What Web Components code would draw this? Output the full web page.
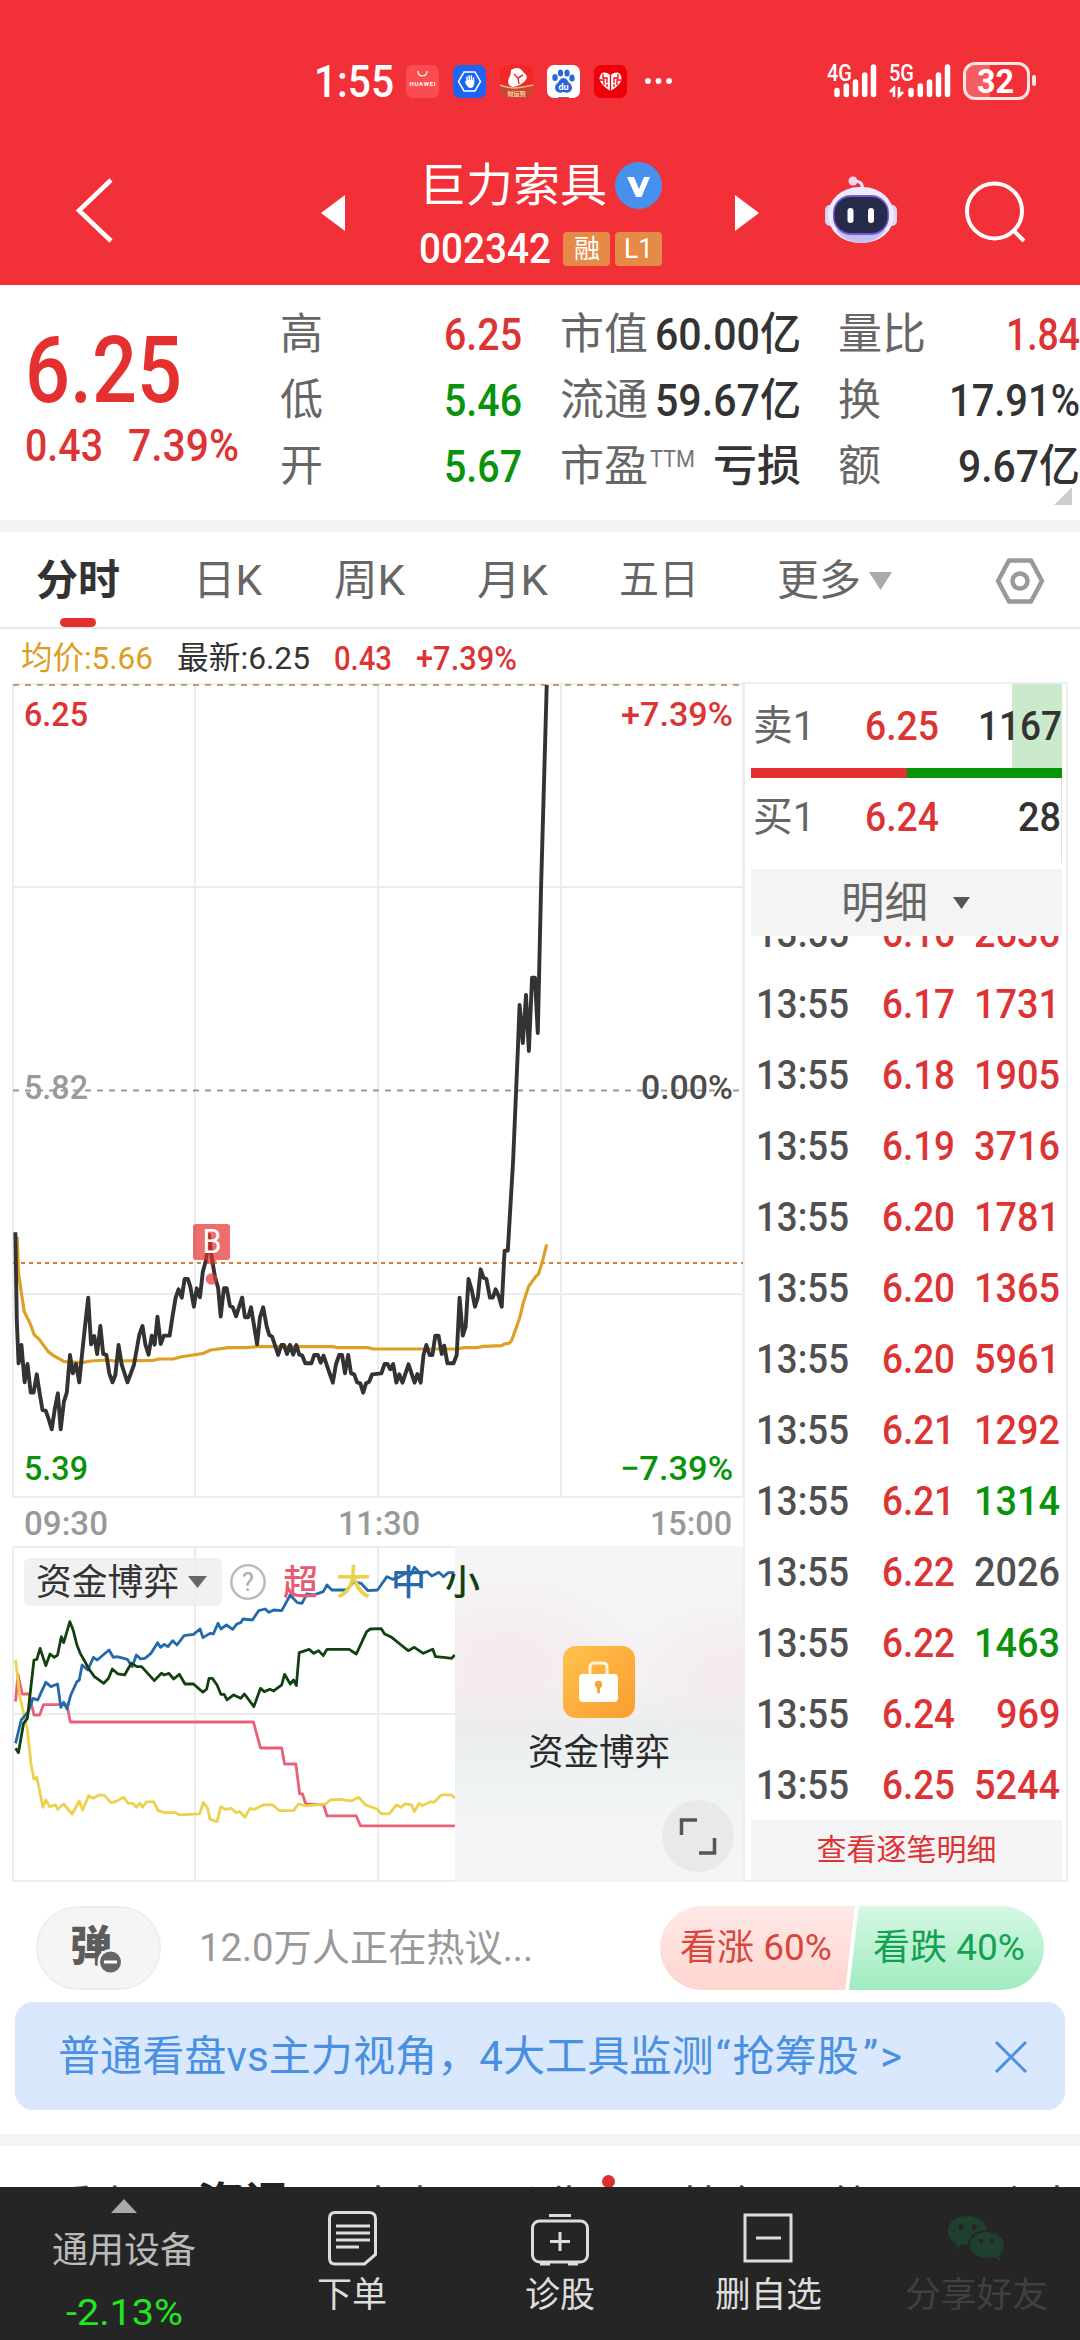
<!DOCTYPE html>
<html lang="zh-CN">
<head>
<meta charset="utf-8">
<title>巨力索具 002342</title>
<style>
html, body {
    margin: 0; padding: 0;
}
body {
    width: 1080px; height: 2340px;
    overflow: hidden;
    background: #fff;
    color: #333;
    font-family: Roboto, "Noto Sans CJK SC", sans-serif;
}
</style>
</head>
<body>
<stock-page></stock-page>
<script>
const BASE = `
<style>
:host { display: block; box-sizing: border-box; }
* { box-sizing: border-box; }
svg { display: block; flex: none; overflow: visible; }
.up { color: #dc3434; }
.down { color: #0a930a; }
</style>`;

// Defines an element from a piece of shadow markup.
function define(name, html) {
    let t = document.createElement('template');
    t.innerHTML = BASE + html;
    customElements.define(name, class extends HTMLElement {
        constructor() {
            super();
            this.attachShadow({mode: 'open'});
            this.shadowRoot.append(t.content.cloneNode(true));
        }
    });
}

// Text condensed or widened to an exact width: <fit-text w="80" s="40">6.25</fit-text>
class FitText extends HTMLElement {

    constructor() {
        super();
        this.attachShadow({mode: 'open'});
        this.shadowRoot.innerHTML = `
<style>
:host { display: block; flex: none; white-space: nowrap; line-height: 1; }
span { display: inline-block; transform-origin: 0 50%; vertical-align: top; }
</style>
<span><slot></slot></span>`;
    }

    connectedCallback() {
        let span = this.shadowRoot.querySelector('span');
        let w = Number(this.getAttribute('w'));
        let s = Number(this.getAttribute('s'));
        this.style.fontSize = `${s}px`;
        this.style.width = `${w}px`;
        this.style.height = `${s}px`;
        let natural = span.getBoundingClientRect().width;
        if (natural) {
            span.style.transform = `scaleX(${w / natural})`;
        }
    }
}

define('status-bar', `
<style>
:host { height: 120px; padding: 61px 0 0 314px; color: #fff; }
.row { display: flex; align-items: center; height: 40px; }
.apps { display: flex; gap: 14px; margin-left: 12px; }
.more { margin-left: 18px; }
.signal { margin-left: 154px; }
</style>
<div class="row">
    <fit-text w="80" s="45" style="font-weight:500">1:55</fit-text>
    <div class="apps">
        <svg width="33" height="33" viewBox="0 0 33 33">
            <rect width="33" height="33" rx="7" fill="#fb4c50"/>
            <path d="M12 6q0 5 4.500 5t4.500-5" fill="none" stroke="#fff" stroke-width="1.200"/>
            <text x="16.500" y="21" font-size="6" font-weight="700" text-anchor="middle" textLength="26" fill="#fff">HUAWEI</text>
        </svg>
        <svg width="33" height="33" viewBox="0 0 33 33">
            <rect width="33" height="33" rx="7" fill="#1e64f4"/>
            <path d="M11 7h11l5.500 9.500L22 26H11L5.500 16.500z" fill="none" stroke="#fff" stroke-width="1.500"/>
            <path d="M14 17v-5M16.200 16v-5M18.400 16v-5M20.500 17v-4" stroke="#fff" stroke-width="1.500" stroke-linecap="round"/>
            <path d="M11.500 16l2 1v-2h7.700v3q0 5-4 5-3 0-5.700-7z" fill="#fff"/>
        </svg>
        <svg width="33" height="33" viewBox="0 0 33 33">
            <rect width="33" height="33" rx="7" fill="#f32726"/>
            <path d="M0 20h33v6q0 7-7 7H7q-7 0-7-7z" fill="#c94630"/>
            <path d="M11 5q8-5 13 3 5 3 1 8-5 5-12 6-7-2-4-9 2-3 2-8z" fill="#fff"/>
            <path d="M14 9l4 4 1 6M18 13l5-3" fill="none" stroke="#f32726" stroke-width="1.500"/>
            <path d="M0 20q8 3 14 3t19-3" fill="none" stroke="#f4b183" stroke-width="1.500"/>
            <text x="16.500" y="30.500" font-size="6" font-weight="700" text-anchor="middle" fill="#fbd9a8">财运到</text>
        </svg>
        <svg width="33" height="33" viewBox="0 0 33 33">
            <rect width="33" height="33" rx="7" fill="#fff"/>
            <g fill="#2b66d9">
                <ellipse cx="8" cy="12.500" rx="2.700" ry="3.500"/>
                <ellipse cx="13.500" cy="8" rx="2.600" ry="3.500"/>
                <ellipse cx="20" cy="8" rx="2.600" ry="3.500"/>
                <ellipse cx="25" cy="13" rx="2.700" ry="3.500"/>
                <path d="M16.500 13q3 0 5 4 5 4 3 8t-8 2q-6 2-8-2t3-8q2-4 5-4z"/>
            </g>
            <text x="16.500" y="24.500" font-size="9" font-weight="700" text-anchor="middle" fill="#fff">du</text>
            <path d="M11 32.500h11" stroke="#a4547c"/>
        </svg>
        <svg width="33" height="33" viewBox="0 0 33 33">
            <rect width="33" height="33" rx="7" fill="#ef0008"/>
            <path d="M16.500 26Q5 19 5.500 13 7 6 13 8l3.500 2L20 8q6-2 7.500 5 .500 6-11 13z" fill="#fff"/>
            <path d="M16.500 9v17M9 9v4h4v5M24 9v4h-4v5M6 15h4v5M27 15h-4v5M13 22v-3M20 22v-3" fill="none" stroke="#ef0008" stroke-width="1.300"/>
        </svg>
    </div>
    <svg class="more" width="27" height="8" viewBox="0 0 27 8" fill="#fff">
        <circle cx="3" cy="4" r="2.900"/><circle cx="13.500" cy="4" r="2.900"/><circle cx="24" cy="4" r="2.900"/>
    </svg>
    <svg class="signal" width="212" height="40" viewBox="826 61 212 40">
        <g fill="#fff" font-weight="500" font-size="24">
            <text x="827" y="81" textLength="25" lengthAdjust="spacingAndGlyphs">4G</text>
            <text x="889" y="81" textLength="25" lengthAdjust="spacingAndGlyphs">5G</text>
        </g>
        <g stroke="#fff" stroke-width="5.500" stroke-linecap="round">
            <path d="M837 90.500v4M846.300 86v8.500M855.500 82v12.500M864.700 75v19.500M873.500 67v27.500"/>
            <path d="M911 90.500v4M920.300 86v8.500M929.500 82v12.500M938.500 75v19.500M947.500 67v27.500"/>
        </g>
        <path d="M890 92l4-4v9M899 87v9l4-4" fill="none" stroke="#fff" stroke-width="2.500"/>
        <path d="M990 63h-15q-11 0-11 11v13q0 11 11 11h15z" fill="#fff" opacity=".22"/>
        <rect x="964.500" y="63.500" width="64" height="35" rx="10.500" fill="none" stroke="#ffe4e4" stroke-width="3"/>
        <rect x="1032" y="75" width="4" height="11" rx="2" fill="#ffe4e4"/>
        <text x="977" y="93" font-size="34" font-weight="700" fill="#fff" textLength="37" lengthAdjust="spacingAndGlyphs">32</text>
    </svg>
</div>`);

define('stock-header', `
<style>
:host { height: 285px; background: #f23037; color: #fff; }
.bar { display: grid; grid-template-columns: 75px 246px 98px 316px 89px 140px 116px; height: 165px; }
.back { margin-top: 58px; }
.prev, .next { margin-top: 75px; }
.title { display: flex; gap: 8px; align-items: center; height: 48px; margin-top: 41px; }
.code { display: flex; align-items: center; height: 34px; margin-top: 23px; font-weight: 500; }
.tag { display: flex; align-items: center; justify-content: center; width: 47px; height: 34px; border-radius: 4px; background: #e58a47; font-weight: 400; }
.code .tag { margin-left: 12px; }
.code .tag + .tag { margin-left: 5px; }
.robot { margin-top: 54px; }
.search { margin-top: 60px; }
</style>
<status-bar></status-bar>
<div class="bar">
    <div></div>
    <svg class="back" width="40" height="66" viewBox="75 178 40 66"><path d="M111 180L79 210.500l32 30.500" fill="none" stroke="#fff" stroke-width="4.500"/></svg>
    <svg class="prev" width="24" height="36" viewBox="0 0 24 36"><path d="M24 0v36L0 18z" fill="#fff"/></svg>
    <div>
        <div class="title">
            <fit-text w="188" s="46">巨力索具</fit-text>
            <svg width="47" height="47" viewBox="0 0 47 47"><circle cx="23.500" cy="23.500" r="23.500" fill="#4790eb"/><path d="M12 15h7l5 12 5-12h6l-8.500 20h-5.500z" fill="#fff"/></svg>
        </div>
        <div class="code">
            <fit-text w="132" s="42">002342</fit-text>
            <div class="tag"><fit-text w="26" s="26">融</fit-text></div>
            <div class="tag"><fit-text w="29" s="28">L1</fit-text></div>
        </div>
    </div>
    <svg class="next" width="24" height="36" viewBox="0 0 24 36"><path d="M0 0v36l24-18z" fill="#fff"/></svg>
    <svg class="robot" width="74" height="70" viewBox="824 174 74 70">
        <path d="M862 190q2-9-8-9" fill="none" stroke="#eee2fa" stroke-width="3"/>
        <circle cx="853" cy="181" r="4.500" fill="#f2d6ef"/>
        <rect x="825" y="205" width="10" height="21" rx="5" fill="#d8d5f8"/>
        <rect x="887" y="205" width="10" height="21" rx="5" fill="#d8d5f8"/>
        <rect x="828" y="187" width="66" height="56" rx="31" ry="28" fill="#eceafd"/>
        <path d="M836 230q10 13 25 13t25-13z" fill="#c3bff0"/>
        <rect x="833" y="195" width="56" height="40" rx="18" fill="#7a59d8"/>
        <rect x="834.500" y="197" width="53" height="36" rx="16" fill="#252b49"/>
        <path d="M850.500 211v9M871 211v9" stroke="#fff" stroke-width="6" stroke-linecap="round"/>
    </svg>
    <svg class="search" width="62" height="64" viewBox="964 180 62 64" fill="none" stroke="#fff" stroke-width="4"><circle cx="994.500" cy="211" r="27.500"/><path d="M1013 230l11 11"/></svg>
</div>`);

define('quote-summary', `
<style>
:host { display: grid; grid-template-columns: 280px 280px 278px 242px; height: 235px; position: relative; }
.price { padding: 40px 0 0 25px; font-weight: 500; }
.change { display: flex; gap: 25px; margin-top: 6px; }
.col { padding-top: 16px; }
.col > div { display: flex; justify-content: space-between; align-items: center; height: 66px; font-weight: 500; }
.lab { color: #666; font-weight: 400; }
.a { width: 242px; }
.b { width: 241px; }
.c { width: 242px; }
.ttm { align-self: flex-start; margin: 14px auto 0 2px; color: #777; font-weight: 400; }
.corner { position: absolute; right: 8px; bottom: 15px; width: 18px; height: 18px; background: #ccc; clip-path: polygon(100% 0, 100% 100%, 0 100%); }
</style>
<div class="price up">
    <fit-text w="157" s="92" style="color:#e53030">6.25</fit-text>
    <div class="change"><fit-text w="78" s="45">0.43</fit-text><fit-text w="111" s="45">7.39%</fit-text></div>
</div>
<div class="col a">
    <div><fit-text class="lab" w="43" s="43">高</fit-text><fit-text class="up" w="78" s="45">6.25</fit-text></div>
    <div><fit-text class="lab" w="43" s="43">低</fit-text><fit-text class="down" w="78" s="45">5.46</fit-text></div>
    <div><fit-text class="lab" w="43" s="43">开</fit-text><fit-text class="down" w="78" s="45">5.67</fit-text></div>
</div>
<div class="col b">
    <div><fit-text class="lab" w="88" s="43">市值</fit-text><fit-text w="146" s="45">60.00亿</fit-text></div>
    <div><fit-text class="lab" w="88" s="43">流通</fit-text><fit-text w="146" s="45">59.67亿</fit-text></div>
    <div><fit-text class="lab" w="88" s="43">市盈</fit-text><fit-text class="ttm" w="45" s="24">TTM</fit-text><fit-text w="88" s="43">亏损</fit-text></div>
</div>
<div class="col c">
    <div><fit-text class="lab" w="88" s="43">量比</fit-text><fit-text class="up" w="74" s="45">1.84</fit-text></div>
    <div><fit-text class="lab" w="43" s="43">换</fit-text><fit-text w="131" s="45">17.91%</fit-text></div>
    <div><fit-text class="lab" w="43" s="43">额</fit-text><fit-text w="122" s="45">9.67亿</fit-text></div>
</div>
<div class="corner"></div>`);

define('period-tabs', `
<style>
:host { display: grid; grid-template-columns: 36px 157px 141px 143px 142px 158px 92px 126px 1fr; align-items: center; height: 97px; padding-top: 2px; border-bottom: 2px solid #e8e8e8; color: #666; position: relative; }
.on { color: #333; font-weight: 700; }
i { position: absolute; left: 60px; bottom: 0; width: 36px; height: 9px; border-radius: 5px; background: #e53030; }
</style>
<span></span>
<fit-text class="on" w="84" s="42">分时</fit-text>
<fit-text w="69" s="42">日K</fit-text>
<fit-text w="71" s="42">周K</fit-text>
<fit-text w="71" s="42">月K</fit-text>
<fit-text w="80" s="41">五日</fit-text>
<fit-text w="84" s="42">更多</fit-text>
<svg width="23" height="18" viewBox="0 0 23 18"><path d="M0 0h23L11.500 18z" fill="#aaa"/></svg>
<svg width="50" height="46" viewBox="0 0 50 46" fill="none" stroke="#999" stroke-width="4.500" stroke-linejoin="round"><path d="M14 2.500h22L47 23 36 43.500H14L3 23z"/><circle cx="25" cy="23" r="7.500"/></svg>
<i></i>`);

define('trend-chart', `
<style>
:host { width: 743px; height: 917px; }
.info { display: flex; gap: 24px; align-items: center; height: 54px; padding: 4px 0 0 21px; font-weight: 500; }
.info .cn { font-weight: 400; }
.avg { color: #dc9e20; }
text { font-size: 34px; }
</style>
<div class="info">
    <fit-text class="avg cn" w="132" s="32">均价:5.66</fit-text>
    <fit-text class="cn" w="133" s="32">最新:6.25</fit-text>
    <fit-text class="up" w="58" s="33">0.43</fit-text>
    <fit-text class="up" w="101" s="33">+7.39%</fit-text>
</div>
<svg width="743" height="863" viewBox="0 683 743 863" font-weight="500">
    <g fill="none" stroke="#ececec" stroke-width="2">
        <path d="M13 684H743M13 887H743M13 1294H743M13 1497H743M13 684V1497M195 684V1497M378 684V1497M561 684V1497M743 684V1497"/>
    </g>
    <path d="M13 685H743" stroke="#c0a070" stroke-width="2" stroke-dasharray="6 6"/>
    <path d="M13 1090.500H743" stroke="#999" stroke-width="2" stroke-dasharray="6 6"/>
    <path d="M13 1263H743" stroke="#d2813c" stroke-width="2" stroke-dasharray="4 4"/>
    <g transform="translate(0 1180) scale(.3571 .3333)" fill="none" stroke-linejoin="round">
        <polyline stroke="#dda022" stroke-width="3.200" vector-effect="non-scaling-stroke" points="48,170 52,280 60,340 68,395 85,432 96,465 110,478 135,515 150,527 180,545 230,548 255,543 300,540 320,543 430,541 445,537 485,537 505,531 540,525 570,520 590,510 640,503 690,503 720,500 930,500 945,503 1030,503 1045,507 1280,507 1300,503 1335,503 1355,499 1405,497 1412,492 1425,490 1432,483 1440,460 1455,415 1465,370 1480,320 1490,305 1500,290 1508,282 1520,240 1531,193"/>
        <polyline stroke="#333" stroke-width="3.900" vector-effect="non-scaling-stroke" points="43,157 47,420 52,550 60,495 69,607 77,552 86,638 94,638 103,583 111,640 119,690 128,692 137,720 145,748 153,690 162,640 170,748 179,665 187,638 196,525 204,580 213,552 222,607 230,520 239,430 247,353 255,493 264,468 272,522 281,438 289,522 298,525 306,580 315,607 323,585 332,495 341,555 357,607 375,555 390,465 399,438 407,493 416,524 425,467 433,494 441,410 450,492 459,467 475,467 483,410 492,352 500,328 509,353 517,297 526,297 533,320 543,380 551,325 560,352 568,275 577,240 585,165 594,240 602,290 611,325 618,410 627,325 635,325 644,378 652,382 661,409 678,353 686,412 695,412 703,382 720,493 728,412 737,382 747,440 754,465 762,470 779,525 788,495 795,495 804,522 812,495 821,524 830,495 838,524 846,526 855,550 872,550 880,525 890,525 898,548 906,527 932,608 941,552 950,525 958,525 966,580 975,525 983,580 992,583 1000,607 1009,610 1017,638 1025,610 1034,605 1042,583 1068,580 1077,552 1085,552 1093,568 1101,552 1110,608 1118,583 1127,608 1144,553 1161,608 1169,582 1178,608 1186,525 1194,495 1203,525 1211,525 1219,467 1228,467 1237,522 1244,497 1253,550 1270,550 1279,525 1287,353 1296,467 1304,440 1312,297 1321,330 1330,380 1338,353 1346,268 1354,293 1362,297 1372,353 1380,353 1388,328 1397,350 1405,380 1413,212 1422,212 1437,-60 1450,-387 1455,-525 1464,-411 1473,-555 1481,-387 1490,-607 1498,-607 1506,-441 1515,-870 1531,-1485"/>
    </g>
    <g fill="#e53030" fill-opacity=".7">
        <path d="M196 1224h31q3 0 3 3v30q0 3-3 3h-10l-5.500 6-5.500-6h-10q-3 0-3-3v-30q0-3 3-3z"/>
        <circle cx="211.500" cy="1279" r="5.800"/>
    </g>
    <text x="202.500" y="1253" font-weight="400" style="font-size:33px" fill="#fff" textLength="19" lengthAdjust="spacingAndGlyphs">B</text>
    <text x="24" y="726" fill="#dc3434" textLength="64" lengthAdjust="spacingAndGlyphs">6.25</text>
    <text x="621" y="726" fill="#dc3434" textLength="112" lengthAdjust="spacingAndGlyphs">+7.39%</text>
    <text x="24" y="1099" fill="#999" textLength="64" lengthAdjust="spacingAndGlyphs">5.82</text>
    <text x="641" y="1099" fill="#4c4c4c" textLength="92" lengthAdjust="spacingAndGlyphs">0.00%</text>
    <text x="24" y="1480" fill="#0a930a" textLength="64" lengthAdjust="spacingAndGlyphs">5.39</text>
    <text x="620" y="1480" fill="#0a930a" textLength="113" lengthAdjust="spacingAndGlyphs">−7.39%</text>
    <g fill="#999">
        <text x="24" y="1535" textLength="84" lengthAdjust="spacingAndGlyphs">09:30</text>
        <text x="338" y="1535" textLength="82" lengthAdjust="spacingAndGlyphs">11:30</text>
        <text x="650" y="1535" textLength="82" lengthAdjust="spacingAndGlyphs">15:00</text>
    </g>
</svg>`);

define('fund-chart', `
<style>
:host { width: 731px; height: 336px; margin-left: 12px; display: grid; }
svg.plot, .over { grid-area: 1 / 1; }
.over { display: grid; grid-template-columns: 443px 288px; z-index: 1; }
.lock { grid-area: 1 / 2; display: flex; flex-direction: column; align-items: center; padding-top: 100px; position: relative;
    background: radial-gradient(ellipse 45% 28% at 18% 35%, #f5e9ec, transparent), radial-gradient(ellipse 35% 22% at 95% 38%, #f4eaec, transparent),
    linear-gradient(#f5f5f6 0, #f4f2f4 40%, #eaedee 54%, #edf2f3 68%, #f4f4f6 84%, #f5f4f7 100%); }
.lock fit-text { margin-top: 17px; color: #2a2a2a; }
.zoom { position: absolute; right: 9px; bottom: 10px; }
.legend { grid-area: 1 / 1 / 2 / 3; display: flex; align-items: center; align-self: start; height: 48px; margin: 12px 0 0 12px; z-index: 1; }
.legend fit-text { position: relative; top: 1px; }
.chip { display: flex; align-items: center; gap: 9px; width: 198px; height: 48px; padding-left: 12px; border-radius: 6px; background: rgba(238,238,238,.85); }
.help { margin: 0 17px 0 8px; }
</style>
<svg class="plot" width="731" height="336" viewBox="12 1546 731 336">
    <path d="M13 1547H743M13 1714H743M13 1881H743M13 1547V1881M195 1547V1881M378 1547V1881" fill="none" stroke="#ececec" stroke-width="2"/>
    <g transform="translate(0 1540) scale(.4719 .3333)" fill="none" stroke-linejoin="round" stroke-width="2.800">
        <polyline vector-effect="non-scaling-stroke" stroke="#ea6076" points="33,485 38,403 47,462 62,462 72,525 84,525 92,494 128,494 142,494 149,546 537,546 552,624 597,624 603,672 627,672 635,762 641,762 648,792 686,795 693,828 755,828 764,858 964,858"/>
        <polyline vector-effect="non-scaling-stroke" stroke="#ecd24c" points="33,360 42,470 58,570 66,675 72,718 78,712 91,802 97,780 105,800 118,795 122,808 135,792 153,822 168,783 175,810 188,767 197,775 210,765 222,767 235,788 245,785 262,772 272,790 282,790 289,802 297,790 302,802 310,786 326,786 335,812 350,818 372,818 380,825 423,822 431,787 440,805 445,838 460,845 468,800 477,808 490,805 500,818 508,815 519,832 530,805 540,808 558,795 578,795 592,812 622,812 632,792 650,798 690,792 700,780 720,778 745,783 760,772 775,795 800,808 808,822 825,822 840,795 850,802 858,792 872,795 878,815 888,790 895,797 912,785 920,787 935,765 957,765 964,775"/>
        <polyline vector-effect="non-scaling-stroke" stroke="#2469ac" points="33,610 45,540 60,515 70,475 80,480 88,455 97,427 108,440 122,432 129,502 135,487 142,507 150,465 163,425 168,420 174,375 186,390 198,352 206,360 231,330 240,352 248,350 270,358 280,380 289,345 298,357 307,355 320,340 334,308 340,322 348,313 356,320 366,302 375,315 390,287 410,283 424,267 430,293 445,280 452,282 462,250 468,267 480,255 493,268 502,252 510,248 515,237 535,240 548,212 562,207 570,217 580,210 597,212 615,165 630,188 640,190 650,162 665,165 685,155 693,135 703,150 735,150 750,125 765,130 780,152 800,150 820,110 832,118 845,112 860,100 870,105 878,82 890,100 905,95 915,108 930,97 940,110 950,98 963,98"/>
        <polyline vector-effect="non-scaling-stroke" stroke="#134010" points="33,625 39,638 50,550 58,535 72,360 78,358 85,325 97,377 106,342 115,352 122,345 130,290 135,308 148,245 155,270 163,315 170,340 190,390 200,410 220,430 230,415 238,387 250,402 264,405 278,370 290,380 300,380 327,422 342,400 348,405 358,400 368,417 380,403 392,432 410,432 430,457 438,447 443,415 450,415 460,435 468,463 475,463 481,480 495,465 510,475 518,462 538,500 552,445 560,455 572,448 580,453 597,435 603,403 615,432 622,420 628,437 634,338 655,328 665,340 675,332 685,347 693,328 740,328 755,342 777,275 785,267 808,266 815,282 830,292 850,315 865,332 878,322 897,340 917,328 923,350 940,352 957,355 964,345"/>
    </g>
</svg>
<div class="over">
    <div class="lock">
        <svg width="72" height="72" viewBox="0 0 72 72">
            <defs><linearGradient id="g" x2="1" y2="1"><stop stop-color="#fec24c"/><stop offset="1" stop-color="#fb9d30"/></linearGradient></defs>
            <rect width="72" height="72" rx="13" fill="url(#g)"/>
            <path d="M27 29v-8q0-4 4-4h9q4 0 4 4v8" fill="none" stroke="#fff3d6" stroke-width="3"/>
            <rect x="16" y="28" width="39" height="28" rx="4" fill="#fff"/>
            <circle cx="35.500" cy="38.500" r="3.700" fill="#f5a63b"/><path d="M35.500 40v6" stroke="#f5a63b" stroke-width="3" stroke-linecap="round"/>
        </svg>
        <fit-text w="142" s="36">资金博弈</fit-text>
        <svg class="zoom" width="72" height="72" viewBox="0 0 72 72"><circle cx="36" cy="36" r="36" fill="#e9e9ea"/><path d="M35 20H19.500V35M37 53H52.500V38" fill="none" stroke="#555" stroke-width="3.500"/></svg>
    </div>
    <div class="legend">
        <div class="chip"><fit-text w="143" s="36">资金博弈</fit-text><svg width="19" height="12" viewBox="0 0 19 12"><path d="M0 0h19L9.500 12z" fill="#666"/></svg></div>
        <svg class="help" width="36" height="36" viewBox="0 0 36 36"><circle cx="18" cy="18" r="16.700" fill="none" stroke="#bbb" stroke-width="2.500"/><text x="18" y="27" font-size="25" text-anchor="middle" fill="#aaa">?</text></svg>
        <fit-text w="35" s="35" style="color:#ea5a72;font-weight:500">超</fit-text>
        <fit-text w="35" s="35" style="color:#ecd24c;font-weight:500;margin-left:18px">大</fit-text>
        <fit-text w="35" s="35" style="color:#2469ac;font-weight:500;margin-left:20px">中</fit-text>
        <fit-text w="35" s="35" style="color:#134010;font-weight:500;margin-left:19px">小</fit-text>
    </div>
</div>`);

class TradeRow extends HTMLElement {

    constructor() {
        super();
        this.attachShadow({mode: 'open'});
    }

    connectedCallback() {
        let volume = this.getAttribute('volume');
        let width = volume.length * 21.500;
        this.shadowRoot.innerHTML = `${BASE}
<style>
:host { display: flex; align-items: center; height: 71px; font-weight: 500; }
.time { color: #505050; margin-left: 5px; }
.price { margin-left: 33px; }
.volume { margin: 0 2px 0 auto; }
.flat { color: #505050; }
</style>
<fit-text class="time" w="93" s="41">13:55</fit-text>
<fit-text class="price up" w="73" s="41">${this.getAttribute('price')}</fit-text>
<fit-text class="volume ${this.getAttribute('side') || 'up'}" w="${width}" s="41">${volume}</fit-text>`;
    }
}

define('order-book', `
<style>
:host { width: 325px; height: 1200px; margin-top: 53px; padding: 0 4px 0 6px; border: 2px solid #eee; }
.quote { display: flex; align-items: center; height: 84px; padding-left: 2px; font-weight: 500; color: #333; }
.quote .lab { color: #666; font-weight: 400; }
.quote .p { margin-left: 50px; }
.quote .v { margin: 0 0 0 auto; }
.sell { background: linear-gradient(#cbeacb, #cbeacb) right / 50px 100% no-repeat; }
.buy { height: 85px; padding-bottom: 7px; border-right: 1px solid #e9dde0; }
.ratio { display: flex; height: 10px; background: #059405; }
.ratio i { width: 156px; background: #e53030; }
.head { display: flex; align-items: center; justify-content: center; gap: 25px; height: 67px; margin-top: 6px; padding-right: 2px; background: #f4f4f4; color: #666; }
.head fit-text { position: relative; top: 1px; }
.list { height: 884px; overflow: hidden; }
.list div { margin-top: -38px; }
.foot { display: flex; align-items: center; justify-content: center; height: 60px; background: #f4f4f4; }
</style>
<div class="quote sell"><fit-text class="lab" w="62" s="41">卖1</fit-text><fit-text class="p up" w="74" s="41">6.25</fit-text><fit-text class="v" w="84" s="41">1167</fit-text></div>
<div class="ratio"><i></i></div>
<div class="quote buy"><fit-text class="lab" w="62" s="41">买1</fit-text><fit-text class="p up" w="74" s="41">6.24</fit-text><fit-text class="v" w="43" s="41">28</fit-text></div>
<div class="head"><fit-text w="87" s="43">明细</fit-text><svg width="17" height="12" viewBox="0 0 17 12"><path d="M0 0h17L8.500 12z" fill="#555"/></svg></div>
<div class="list"><div>
    <trade-row price="6.16" volume="2636"></trade-row>
    <trade-row price="6.17" volume="1731"></trade-row>
    <trade-row price="6.18" volume="1905"></trade-row>
    <trade-row price="6.19" volume="3716"></trade-row>
    <trade-row price="6.20" volume="1781"></trade-row>
    <trade-row price="6.20" volume="1365"></trade-row>
    <trade-row price="6.20" volume="5961"></trade-row>
    <trade-row price="6.21" volume="1292"></trade-row>
    <trade-row price="6.21" volume="1314" side="down"></trade-row>
    <trade-row price="6.22" volume="2026" side="flat"></trade-row>
    <trade-row price="6.22" volume="1463" side="down"></trade-row>
    <trade-row price="6.24" volume="969"></trade-row>
    <trade-row price="6.25" volume="5244"></trade-row>
</div></div>
<div class="foot up"><fit-text w="180" s="30">查看逐笔明细</fit-text></div>`);

define('chat-row', `
<style>
:host { display: flex; align-items: center; height: 84px; margin-top: 24px; padding: 0 36px; }
.pill { display: flex; align-items: center; justify-content: center; width: 125px; height: 84px; padding-right: 4px; border: 2px solid #eee; border-radius: 42px; background: #f5f5f5; }
.talk { margin-left: 38px; color: #999; }
.vote { display: flex; width: 384px; height: 84px; margin-left: auto; }
.vote div { display: flex; align-items: center; height: 84px; }
.bull { width: 195px; padding-left: 20px; border-radius: 42px 0 0 42px; color: #d9473c; background: linear-gradient(#ffe9e7, #fed5cf); clip-path: polygon(0 0, 100% 0, 95% 100%, 0 100%); }
.bear { width: 195px; margin-left: -6px; padding-left: 24px; border-radius: 0 42px 42px 0; color: #12a150; background: linear-gradient(#d6f8e4, #a0ecc0); clip-path: polygon(5% 0, 100% 0, 100% 100%, 0 100%); }
</style>
<div class="pill">
    <svg width="52" height="50" viewBox="72 1921 52 50">
        <text x="71" y="1959" font-size="42" font-weight="900" fill="#5c5c5c">弹</text>
        <circle cx="111.500" cy="1960" r="13" fill="#f5f5f5"/><circle cx="111.500" cy="1960" r="10.500" fill="#666"/><path d="M105 1960h13" stroke="#fff" stroke-width="3"/>
    </svg>
</div>
<fit-text class="talk" w="334" s="38">12.0万人正在热议...</fit-text>
<div class="vote">
    <div class="bull"><fit-text w="152" s="36">看涨 60%</fit-text></div>
    <div class="bear"><fit-text w="152" s="36">看跌 40%</fit-text></div>
</div>`);

define('promo-banner', `
<style>
:host { display: flex; align-items: center; justify-content: space-between; height: 108px; margin: 12px 15px 0; padding: 2px 39px 0 43px; border-radius: 18px; background: #d9e8fc; color: #4a90e2; }
.open { margin: 0 2px 0 2px; }
.close { margin: 0 2px 0 4px; }
</style>
<fit-text w="844" s="42">普通看盘vs主力视角，4大工具监测<span class="open">“</span>抢筹股<span class="close">”</span>&gt;</fit-text>
<svg width="30" height="30" viewBox="0 0 30 30"><path d="M0 0l30 30M30 0L0 30" stroke="#4a90e2" stroke-width="3"/></svg>`);

define('news-tabs', `
<style>
:host { display: grid; grid-template-columns: 145px 160px 148px 173px 153px 165px 84px; height: 53px; margin-top: 24px; padding: 40px 0 0 52px; border-top: 12px solid #f4f4f4; overflow: hidden; position: relative; color: #444; }
.on { color: #222; font-weight: 700; margin-top: -5px; }
i { position: absolute; left: 602px; top: 29px; width: 13px; height: 13px; border-radius: 50%; background: #dc3030; }
</style>
<fit-text w="84" s="42">看点</fit-text>
<fit-text class="on" w="94" s="47">资讯</fit-text>
<fit-text w="84" s="42">大事</fit-text>
<fit-text w="84" s="42">公告</fit-text>
<fit-text w="84" s="42">基金</fit-text>
<fit-text w="84" s="42">简况</fit-text>
<fit-text w="84" s="42">主力</fit-text>
<i></i>`);

define('bottom-bar', `
<style>
:host { display: grid; grid-template-columns: 248px 208px 208px 208px 208px; height: 153px; background: #252525; color: #ddd; position: relative; }
.item { display: flex; flex-direction: column; align-items: center; padding-top: 22px; }
.item svg { height: 58px; }
.item fit-text { margin-top: 11px; }
.index { padding-top: 12px; color: #bbb; }
.index svg { height: 14px; }
.index fit-text { margin-top: 20px; }
.index fit-text + fit-text { margin-top: 25px; color: #20e820; }
.off { color: #404040; }
</style>
<div class="item index">
    <svg width="26" height="14" viewBox="0 0 26 14"><path d="M13 0l13 14H0z" fill="#aaa"/></svg>
    <fit-text w="144" s="36">通用设备</fit-text>
    <fit-text w="117" s="37">-2.13%</fit-text>
</div>
<div class="item">
    <svg width="50" viewBox="327 2208 50 58" fill="none" stroke="#ddd" stroke-width="3"><path d="M335 2211.500h34q6.500 0 6.500 6v36l-11 9.500H335q-5.500 0-5.500-6v-39.500q0-6 5.500-6zM336 2225h34M336 2232h34M336 2239h34M336 2246h23"/></svg>
    <fit-text w="70" s="35">下单</fit-text>
</div>
<div class="item">
    <svg width="58" viewBox="531 2208 58 58" fill="none" stroke="#ddd" stroke-width="3"><rect x="532.500" y="2220" width="55" height="41" rx="7"/><path d="M549 2214.500h22M550 2240.500h20M560 2231v19M540 2263h10M568 2263h10"/></svg>
    <fit-text w="70" s="35">诊股</fit-text>
</div>
<div class="item">
    <svg width="50" viewBox="742 2208 50 58" fill="none" stroke="#ddd" stroke-width="3"><rect x="744" y="2214" width="46" height="46"/><path d="M755 2237h25"/></svg>
    <fit-text w="107" s="35">删自选</fit-text>
</div>
<div class="item off">
    <svg width="56" viewBox="948 2208 56 58" fill="#20402f"><path d="M955 2250l3-6q-10-6-10-14 1-14 19-15 18 1 20 14-18 1-19 15l-7-1z"/><path d="M987 2231q16 1 17 13 0 6-5 10l1 6-6-4q-23 3-24-12 1-12 17-13z"/><g fill="#252525"><circle cx="961" cy="2226" r="2.700"/><circle cx="974" cy="2226" r="2.700"/><circle cx="981" cy="2240" r="2.200"/><circle cx="992" cy="2240" r="2.200"/></g></svg>
    <fit-text w="143" s="35">分享好友</fit-text>
</div>`);

define('stock-page', `
<style>
:host { width: 1080px; height: 2340px; overflow: hidden; }
.gap { height: 12px; background: #f3f3f3; }
.main { display: grid; grid-template-columns: 743px 1fr; height: 1253px; }
</style>
<stock-header></stock-header>
<quote-summary></quote-summary>
<div class="gap"></div>
<period-tabs></period-tabs>
<div class="main">
    <div>
        <trend-chart></trend-chart>
        <fund-chart></fund-chart>
    </div>
    <order-book></order-book>
</div>
<chat-row></chat-row>
<promo-banner></promo-banner>
<news-tabs></news-tabs>
<bottom-bar></bottom-bar>`);

customElements.define('trade-row', TradeRow);
customElements.define('fit-text', FitText);
</script>
</body>
</html>
